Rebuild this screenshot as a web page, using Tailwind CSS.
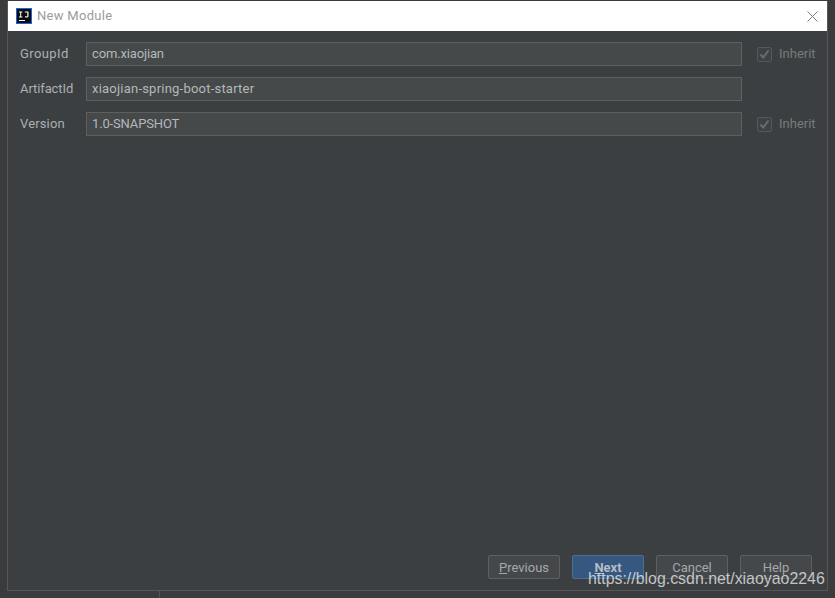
<!DOCTYPE html>
<html lang="en">
<head>
    <meta charset="UTF-8">
    <title>New Module</title>
    <script src="https://cdn.jsdelivr.net/npm/@tailwindcss/browser@4"></script>
</head>
<body class="relative w-[835px] h-[598px] overflow-hidden bg-[#393b3d] font-['Roboto','Noto_Sans',sans-serif] text-[13px] text-[#a9b0b3]">
    <div class="absolute left-[159px] top-[590px] w-px h-2 bg-[#505354]"></div>
    <div class="pt-px pl-[7px] pr-[7px] pb-[7px] h-full">
        <div class="flex flex-col h-full border-l border-r border-b border-[#555759] bg-[#3c3f41]">
            <div class="flex items-center h-[30px] bg-white pl-[8px] pr-[9px] shrink-0">
                <svg class="w-4 h-4 shrink-0" viewBox="0 0 16 16">
                    <rect x="0.5" y="0.5" width="15" height="15" fill="#0a0a0c" stroke="#0b6be0"/>
                    <rect x="3" y="12" width="6" height="1" fill="#fff"/>
                    <path d="M3 3.5h3.4v1H5.2v4h1.2v1H3v-1h1.2v-4H3zM8.8 3.5h3.7v4.7c0 .9-.7 1.4-1.8 1.4-.8 0-1.4-.2-1.9-.7l.6-.8c.3.3.7.5 1.1.5.5 0 .8-.2.8-.6V4.5H8.8z" fill="#fff"/>
                </svg>
                <span class="ml-[5px] text-[#9b9b9b] tracking-[0.3px]">New Module</span>
                <svg class="ml-auto w-[11px] h-[11px]" viewBox="0 0 11 11" fill="none" stroke="#7d7d7d" stroke-width="1">
                    <path d="M0.5 0.5l10 10M10.5 0.5l-10 10"/>
                </svg>
            </div>

            <div class="flex flex-col flex-1 pt-[11px] pl-[12px] pr-[11px] pb-[11px]">
                <div class="flex flex-col gap-[11px]">
                    <div class="flex items-center h-6">
                        <label class="w-[66px] shrink-0 tracking-[0.4px]">GroupId</label>
                        <div class="w-[656px] shrink-0 h-6 px-[5px] flex items-center bg-[#45494a] border border-[#5e6060] text-[#b4b8ba] tracking-[-0.15px]">com.xiaojian</div>
                        <div class="ml-[15px] w-[15px] h-[15px] shrink-0 flex items-center justify-center border border-[#555759] rounded-[2px] bg-[#3f4244]">
                            <svg class="w-[11px] h-[11px]" viewBox="0 0 11 11" fill="none" stroke="#6a6d6f" stroke-width="2"><path d="M1.5 5.5l2.7 3L9.5 1.5"/></svg>
                        </div>
                        <span class="ml-[7px] text-[#777b7d]">Inherit</span>
                    </div>
                    <div class="flex items-center h-6">
                        <label class="w-[66px] shrink-0 tracking-[-0.1px]">ArtifactId</label>
                        <div class="w-[656px] shrink-0 h-6 px-[5px] flex items-center bg-[#45494a] border border-[#5e6060] text-[#b4b8ba] tracking-[0.22px]">xiaojian-spring-boot-starter</div>
                    </div>
                    <div class="flex items-center h-6">
                        <label class="w-[66px] shrink-0 tracking-[0.15px]">Version</label>
                        <div class="w-[656px] shrink-0 h-6 px-[5px] flex items-center bg-[#45494a] border border-[#5e6060] text-[#b4b8ba] tracking-[-0.15px]">1.0-SNAPSHOT</div>
                        <div class="ml-[15px] w-[15px] h-[15px] shrink-0 flex items-center justify-center border border-[#555759] rounded-[2px] bg-[#3f4244]">
                            <svg class="w-[11px] h-[11px]" viewBox="0 0 11 11" fill="none" stroke="#6a6d6f" stroke-width="2"><path d="M1.5 5.5l2.7 3L9.5 1.5"/></svg>
                        </div>
                        <span class="ml-[7px] text-[#777b7d]">Inherit</span>
                    </div>
                </div>

                <div class="mt-auto flex justify-end gap-3 pr-[4px]">
                    <button class="w-[72px] h-6 pt-px rounded-[2px] border border-[#5e6060] bg-[#45484a] text-[#a3a8ab]"><span class="underline">P</span>revious</button>
                    <button class="w-[72px] h-6 pt-px rounded-[2px] border border-[#4c708c] bg-[#365880] font-bold text-[#b4bcc4]"><span class="underline">N</span>ext</button>
                    <button class="w-[72px] h-6 pt-px rounded-[2px] border border-[#5e6060] bg-[#45484a] text-[#a3a8ab]">Cancel</button>
                    <button class="w-[72px] h-6 pt-px rounded-[2px] border border-[#5e6060] bg-[#45484a] text-[#a3a8ab]">Help</button>
                </div>
            </div>
        </div>
    </div>
    <div class="absolute left-[588px] top-[568px] font-['Liberation_Sans',sans-serif] text-[15.9px] leading-[22px] whitespace-nowrap text-white/70">https://blog.csdn.net/xiaoyao2246</div>
</body>
</html>
